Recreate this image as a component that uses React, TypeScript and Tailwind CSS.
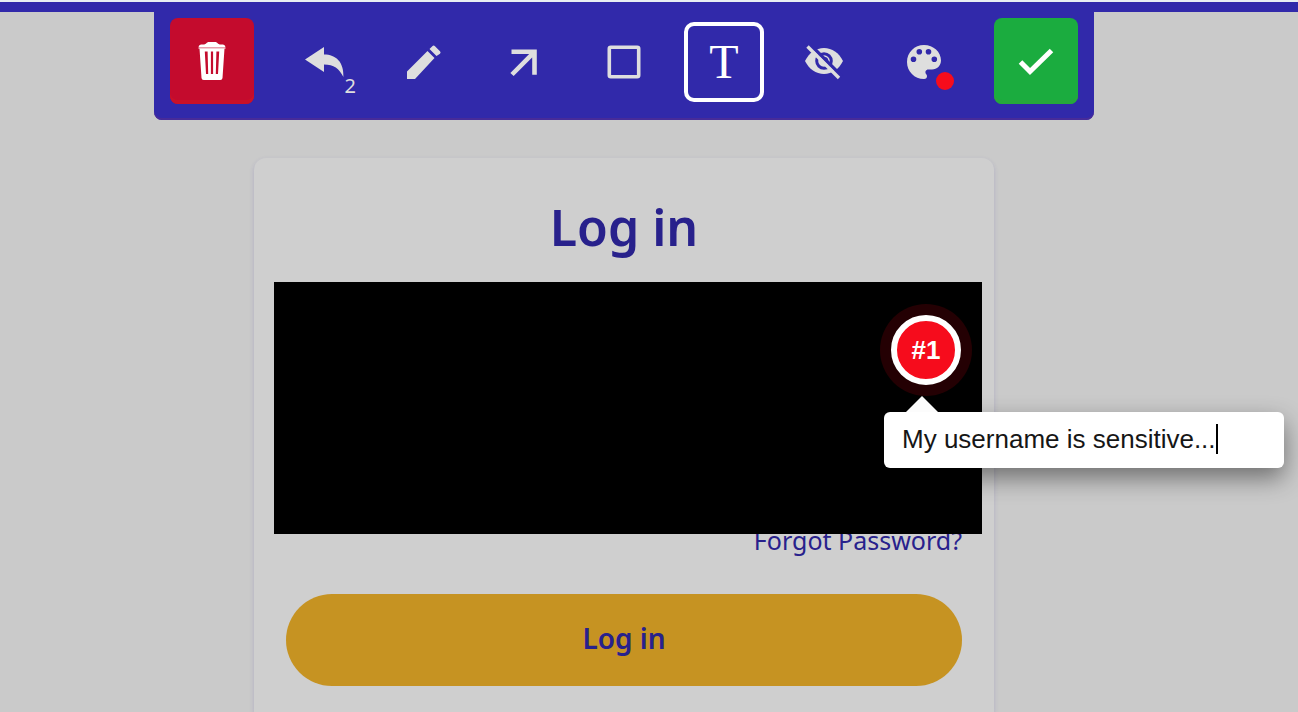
import { useState, type ReactNode } from "react";

const TrashIcon = () => (
  <svg className="w-7 h-10" viewBox="0 0 28 40" fill="currentColor">
    <path d="M5 3.500 C9 3.500 8 1 11 1 h6 C20 1 19 3.500 23 3.500 h2 q2 0 2.500 2.500 H.5 Q1 3.500 3 3.500z" />
    <path d="M0.500 6h27v2h-27z" opacity=".6" />
    <path
      fillRule="evenodd"
      d="M1.500 7.500h25l-2 29.500q-.2 2-2.200 2H5.700Q3.700 39 3.500 37zM6.800 10.500l1.200 22.500h2.200l-.6-22.500zM12.900 10.500v22.500h2.200v-22.500zM18.400 10.500l-.6 22.500H20l1.200-22.500z"
    />
  </svg>
);

const UndoIcon = () => (
  <svg className="w-10 h-10" viewBox="0 0 40 40" fill="currentColor">
    <path d="M20 5v7.500C32 12.500 40 20 39.400 35 35 26.500 30 22.500 20 22.500V30L1 17.500z" />
  </svg>
);

const PencilIcon = () => (
  <svg className="w-10 h-10" viewBox="0 0 40 40" fill="currentColor">
    <path d="M3 29.500 23.500 9l7 7L11 37H3zM25.500 7l2.800-2.800q1.400-1.200 2.700 0l5 5q1.200 1.300 0 2.500L32.500 14z" />
  </svg>
);

const ArrowIcon = () => (
  <svg className="w-10 h-10" viewBox="0 0 40 40" fill="none" stroke="currentColor" strokeWidth="4.600">
    <path d="M7.500 9.800h23v23M30 10.300 8 32.500" />
  </svg>
);

const SquareIcon = () => (
  <svg className="w-10 h-10" viewBox="0 0 40 40" fill="none" stroke="currentColor" strokeWidth="3.600">
    <rect x="5.300" y="5.300" width="29.400" height="29.400" rx="1.500" />
  </svg>
);

const HideIcon = () => (
  <svg className="w-10 h-10" viewBox="0 0 40 40">
    <path d="M1 19C5 11 12 6 20 6s15 5 19 13c-4 8-11 13-19 13S5 27 1 19z" fill="currentColor" />
    <circle cx="20" cy="19" r="7.300" fill="none" stroke="#3129aa" strokeWidth="3" />
    <path d="M20.500 15.800a3.200 3.200 0 0 1 3 3.200" fill="none" stroke="#3129aa" strokeWidth="1.600" />
    <path d="M5.500 2 38 34.500" stroke="#3129aa" strokeWidth="3.500" />
    <path d="M3.500 4.500 35 36" stroke="currentColor" strokeWidth="3.400" />
  </svg>
);

const PaletteIcon = () => (
  <svg className="w-10 h-10" viewBox="0 0 40 40" fill="currentColor">
    <path
      fillRule="evenodd"
      d="M20 3C10.500 3 3 10.500 3 20s7.500 17 17 17c2 0 3-1.300 3-2.800 0-.9-.3-1.500-.8-2-1.700-2-.4-4.700 2.100-4.700H28c5 0 9-4 9-9C37 10 29.500 3 20 3zM9.500 20a2.800 2.800 0 1 1 0-5.600 2.800 2.800 0 0 1 0 5.600zM15.300 12.600a2.800 2.800 0 1 1 0-5.600 2.800 2.800 0 0 1 0 5.600zM24.500 12.600a2.800 2.800 0 1 1 0-5.600 2.800 2.800 0 0 1 0 5.600zM30.300 20a2.800 2.800 0 1 1 0-5.600 2.800 2.800 0 0 1 0 5.600z"
    />
  </svg>
);

const CheckIcon = () => (
  <svg className="w-10 h-10" viewBox="0 0 40 40" fill="none" stroke="currentColor" strokeWidth="5">
    <path d="M4.500 21 14 30.500 35.500 9.500" />
  </svg>
);

type Tool = {
  name: string;
  icon: ReactNode;
  extra?: ReactNode;
};

const tools: Tool[] = [
  {
    name: "Undo",
    icon: <UndoIcon />,
    extra: <span className="absolute right-2 bottom-1 text-xl leading-6">2</span>,
  },
  { name: "Draw", icon: <PencilIcon /> },
  { name: "Arrow", icon: <ArrowIcon /> },
  { name: "Rectangle", icon: <SquareIcon /> },
  {
    name: "Text",
    icon: <span className="font-['Liberation_Serif',serif] text-5xl">T</span>,
  },
  { name: "Hide", icon: <HideIcon /> },
  {
    name: "Color",
    icon: <PaletteIcon />,
    extra: <span className="absolute right-2.5 bottom-3 size-[18px] rounded-full bg-[#f60c1c]" />,
  },
];

const Toolbar = () => {
  const [active, setActive] = useState("Text");

  return (
    <div className="mx-auto flex w-full max-w-[940px] items-start justify-between rounded-b-lg bg-[#3129aa] px-4 pt-1.5 pb-4 shadow-[inset_0_-2px_0_#472b99]">
      <button
        aria-label="Delete"
        className="flex h-[86px] w-[84px] items-center justify-center rounded-lg bg-[#c40b2d] text-white shadow-[inset_0_-4px_0_#ca1128]"
      >
        <TrashIcon />
      </button>
      <div className="flex gap-5 pt-1">
        {tools.map((tool) => (
          <button
            key={tool.name}
            aria-label={tool.name}
            onClick={() => setActive(tool.name)}
            className={
              active === tool.name
                ? "relative flex size-20 items-center justify-center rounded-[10px] border-4 border-white text-white"
                : "relative flex size-20 items-center justify-center text-[#dedede]"
            }
          >
            {tool.icon}
            {tool.extra}
          </button>
        ))}
      </div>
      <button
        aria-label="Done"
        className="flex h-[86px] w-[84px] items-center justify-center rounded-lg bg-[#1bac3f] text-white shadow-[inset_0_-4px_0_#26a73c]"
      >
        <CheckIcon />
      </button>
    </div>
  );
};

const Annotation = () => {
  const [note, setNote] = useState("My username is sensitive...");

  return (
    <>
      <div className="absolute top-[22px] right-2.5 flex size-[92px] items-center justify-center rounded-full bg-[#240003]">
        <button className="size-[70px] rounded-full border-6 border-white bg-[#f60c1c] font-['Liberation_Sans',sans-serif] text-[26px] font-bold text-white">
          #1
        </button>
      </div>
      <div className="absolute top-[114px] -right-[302px] w-[400px] font-['Liberation_Sans',sans-serif]">
        <svg className="ml-[22px] h-4 w-8" viewBox="0 0 32 16" fill="#fcfcfc">
          <path d="M16 0 32 16H0z" />
        </svg>
        <label className="flex h-14 items-center rounded-md bg-white px-[18px] pb-0.5 shadow-[0_10px_24px_rgba(0,0,0,0.45)]">
          <input
            aria-label="Comment"
            value={note}
            onChange={(e) => setNote(e.target.value)}
            className="field-sizing-content text-[26px] leading-8 text-[#161616] caret-transparent outline-none"
          />
          <span className="h-[30px] w-0.5 bg-black" />
        </label>
      </div>
    </>
  );
};

const LoginCard = () => (
  <main className="mx-auto mt-[38px] flex w-full max-w-[740px] flex-1 flex-col rounded-t-xl bg-[#cfcfcf] px-8 pt-9 pb-6 text-[#28218c] shadow-[0_2px_5px_rgba(49,41,170,0.16)]">
    <h1 className="text-center text-[50px] leading-[66px] font-semibold">Log in</h1>
    <div className="relative z-10 mt-[22px] -mr-5 -ml-3 h-[252px] bg-black">
      <Annotation />
    </div>
    <a href="#forgot" className="-mt-2.5 self-end text-[25px] leading-8">
      Forgot Password?
    </a>
    <button className="mt-[38px] h-[92px] rounded-full bg-[#c69322] pb-1 text-[28px] font-semibold">
      Log in
    </button>
  </main>
);

const App = () => {
  return (
    <div className="flex min-h-screen flex-col overflow-x-hidden bg-[#cacaca] font-['Noto_Sans',sans-serif]">
      <div className="h-3 border-t-2 border-[#e8eef2] bg-[#3129aa]" />
      <div className="flex flex-1 flex-col pr-[50px]">
        <Toolbar />
        <LoginCard />
      </div>
    </div>
  );
};

export default App;
